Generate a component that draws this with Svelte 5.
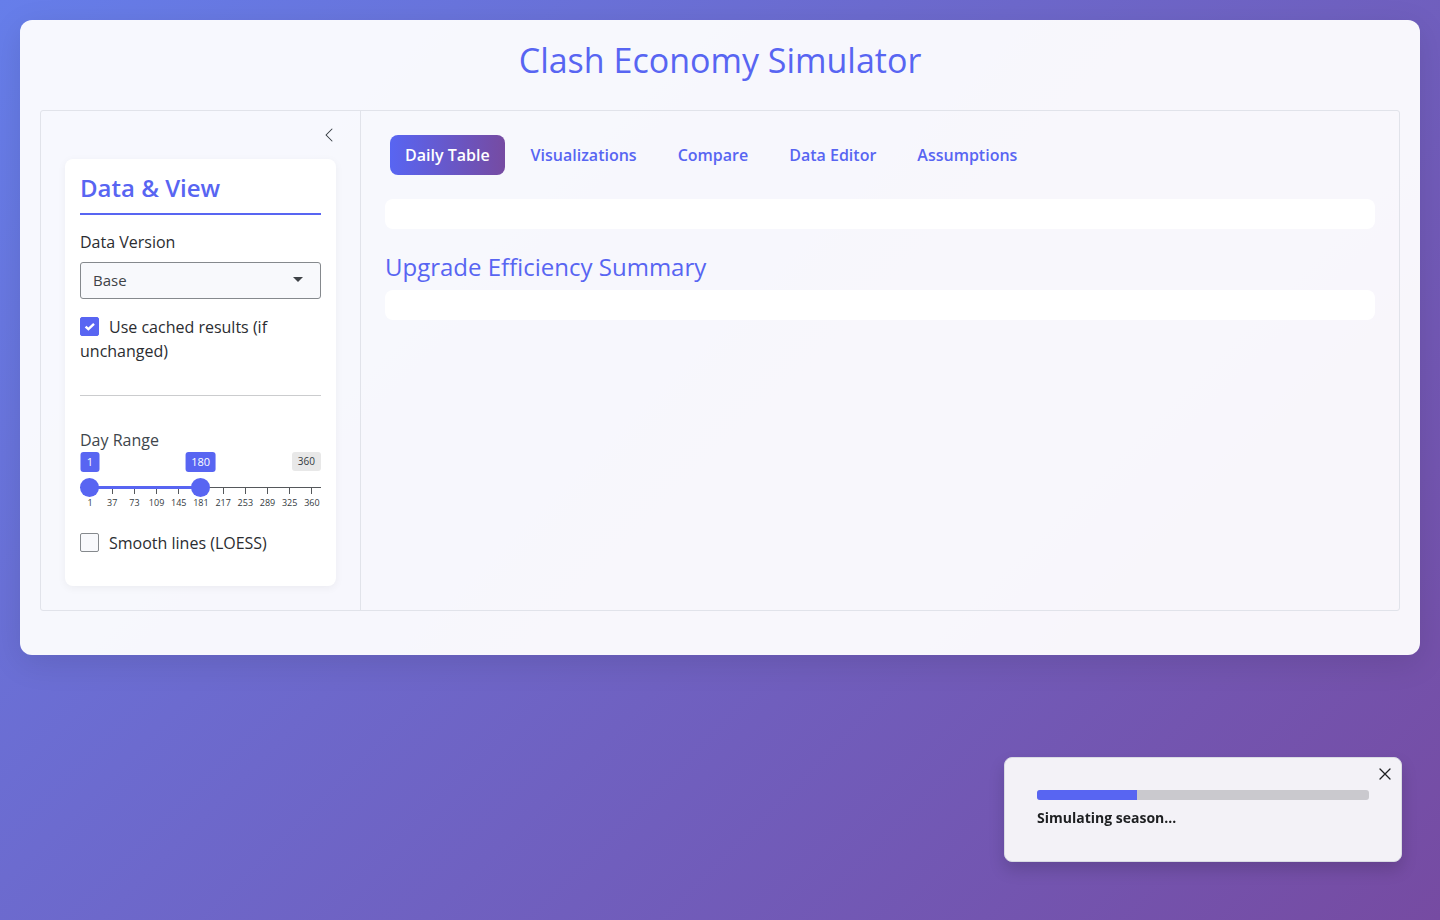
<script>
  const tabs = ['Daily Table', 'Visualizations', 'Compare', 'Data Editor', 'Assumptions'];
  const ticks = [1, 37, 73, 109, 145, 181, 217, 253, 289, 325, 360];
  const min = 1;
  const max = 360;

  let active = $state('Daily Table');
  let version = $state('Base');
  let cached = $state(true);
  let smooth = $state(false);
  let from = $state(1);
  let to = $state(180);
  let collapsed = $state(false);
  let showToast = $state(true);
  let progress = $state(30);

  const pct = (v) => ((v - min) / (max - min)) * 100;
</script>

<div class="page">
  <main class="container">
    <h1>Clash Economy Simulator</h1>

    <div class="layout" class:collapsed>
      <aside class="sidebar">
        <button class="toggle" type="button" aria-label="Toggle sidebar" onclick={() => (collapsed = !collapsed)}>
          <svg viewBox="0 0 16 16" width="16" height="16" fill="currentColor" aria-hidden="true">
            <path d="M12.354 1.646a.5.5 0 0 1 0 .708L6.707 8l5.647 5.646a.5.5 0 0 1-.708.708l-6-6a.5.5 0 0 1 0-.708l6-6a.5.5 0 0 1 .708 0z" />
          </svg>
        </button>

        {#if !collapsed}
          <section class="panel">
            <h2>Data &amp; View</h2>

            <label class="field-label" for="version">Data Version</label>
            <div class="select-wrap">
              <select id="version" bind:value={version}>
                <option>Base</option>
              </select>
              <span class="caret"></span>
            </div>

            <label class="check">
              <input type="checkbox" bind:checked={cached} />Use cached results (if unchanged)
            </label>

            <hr />

            <div class="range-label" id="range-label">Day Range</div>
            <div class="slider" role="group" aria-labelledby="range-label">
              <div class="tags">
                <div class="tag-track">
                  <span class="tag" style:left="{pct(from)}%">{from}</span>
                  <span class="tag" style:left="{pct(to)}%">{to}</span>
                </div>
                <span class="limit">{max}</span>
              </div>
              <div class="rail">
                <div class="rail-track">
                  <div class="fill" style:left="{pct(from)}%" style:width="{pct(to) - pct(from)}%"></div>
                </div>
                <input type="range" aria-label="First day" {min} {max} bind:value={from} />
                <input type="range" aria-label="Last day" {min} {max} bind:value={to} />
              </div>
              <div class="ticks">
                {#each ticks as t}
                  <span class="tick"><i></i><b>{t}</b></span>
                {/each}
              </div>
            </div>

            <label class="check">
              <input type="checkbox" bind:checked={smooth} />Smooth lines (LOESS)
            </label>
          </section>
        {/if}
      </aside>

      <section class="content">
        <nav class="tabs">
          {#each tabs as tab}
            <button type="button" class:active={active === tab} onclick={() => (active = tab)}>{tab}</button>
          {/each}
        </nav>
        <div class="output"></div>
        <h3>Upgrade Efficiency Summary</h3>
        <div class="output"></div>
      </section>
    </div>
  </main>

  {#if showToast}
    <div class="toast" role="status">
      <button type="button" class="close" aria-label="Close" onclick={() => (showToast = false)}>
        <svg viewBox="0 0 12 12" width="12" height="12" aria-hidden="true">
          <path d="M1 1 11 11M11 1 1 11" fill="none" stroke="currentColor" stroke-width="1.3" stroke-linecap="round" />
        </svg>
      </button>
      <div class="progress"><div class="bar" style:width="{progress}%"></div></div>
      <p>Simulating season...</p>
    </div>
  {/if}
</div>

<style>
  :global(body) {
    margin: 0;
  }
  .page {
    --accent: #5865f2;
    box-sizing: border-box;
    min-height: 100vh;
    padding: 20px;
    background: linear-gradient(135deg, #667eea 0%, #764ba2 100%);
    color: #2b2d31;
    font: 400 16px/24px 'Open Sans', sans-serif;
  }
  .page :where(*) {
    box-sizing: border-box;
  }
  button,
  select {
    font: inherit;
    cursor: pointer;
  }
  .container {
    padding: 20px 20px 44px;
    border-radius: 12px;
    background: rgba(255, 255, 255, 0.95);
    box-shadow: 0 8px 32px rgba(0, 0, 0, 0.1);
  }
  h1,
  h2,
  h3 {
    margin: 0;
    color: var(--accent);
    font-weight: 400;
  }
  h1 {
    margin-bottom: 30px;
    text-align: center;
    font-size: 34px;
    line-height: 40px;
  }
  .layout {
    display: grid;
    grid-template-columns: 320px minmax(0, 1fr);
    border: 1px solid #e1e3ea;
    border-radius: 3px;
  }
  .layout.collapsed {
    grid-template-columns: 64px minmax(0, 1fr);
  }
  .sidebar {
    display: flex;
    flex-direction: column;
    padding: 16px 24px 24px;
    border-right: 1px solid #e1e3ea;
  }
  .toggle {
    display: flex;
    align-self: flex-end;
    margin-bottom: 16px;
    padding: 0;
    border: 0;
    background: none;
    color: #343a40;
  }
  .panel {
    padding: 15px 15px 31px;
    border-radius: 8px;
    background: #fff;
    box-shadow: 0 2px 8px rgba(0, 0, 0, 0.05);
  }
  h2 {
    margin-bottom: 15px;
    padding-bottom: 12px;
    border-bottom: 2px solid var(--accent);
    font-size: 24px;
    font-weight: 600;
    line-height: 27px;
  }
  .field-label {
    display: block;
    margin-bottom: 8px;
  }
  .select-wrap {
    display: grid;
    align-items: center;
    margin-bottom: 16px;
  }
  .select-wrap > * {
    grid-area: 1 / 1;
  }
  select {
    appearance: none;
    width: 100%;
    height: 37px;
    padding: 0 12px 2px;
    border: 1px solid #85898d;
    border-radius: 3px;
    background: #f8f9fc;
    color: #3f4347;
    font-size: 15px;
  }
  .caret {
    justify-self: end;
    margin: 0 18px 2px 0;
    border: 5px solid transparent;
    border-top-color: #3f4347;
    border-bottom: 0;
    pointer-events: none;
  }
  .check {
    display: block;
  }
  .check input {
    appearance: none;
    width: 19px;
    height: 19px;
    margin: 0 10px 0 0;
    border: 1px solid #85898d;
    border-radius: 2px;
    background: #f8f9fc;
    vertical-align: -3px;
  }
  .check input:checked {
    border-color: var(--accent);
    background: var(--accent)
      url("data:image/svg+xml,%3Csvg xmlns='http://www.w3.org/2000/svg' viewBox='0 0 19 19'%3E%3Cpath d='M5.6 9.6l2.8 2.6L14 6.8' fill='none' stroke='%23fff' stroke-width='2.4'/%3E%3C/svg%3E")
      center / 19px 19px;
  }
  hr {
    height: 1px;
    margin: 32px 0;
    border: 0;
    background: #cbccce;
  }
  .range-label {
    color: #40464c;
    font-weight: 500;
  }
  .slider {
    margin-bottom: 20px;
  }
  .tags {
    display: flex;
    align-items: flex-start;
    height: 25px;
    padding-left: 10px;
  }
  .tag-track {
    position: relative;
    flex: 1;
    margin-right: -20px;
  }
  .tag,
  .limit {
    border-radius: 3px;
    text-align: center;
  }
  .tag {
    position: absolute;
    top: 0;
    min-width: 19px;
    padding: 0 6px;
    background: var(--accent);
    color: #fff;
    font-size: 11px;
    font-weight: 500;
    line-height: 20px;
    transform: translateX(-50%);
  }
  .limit {
    padding: 0 6px;
    background: #e8e8e8;
    color: #343a40;
    font-size: 10px;
    line-height: 19px;
  }
  .rail {
    position: relative;
    display: flex;
    align-items: center;
    height: 21px;
    padding: 0 9px;
    background: linear-gradient(#55585b, #55585b) center / 100% 1px no-repeat;
  }
  .rail-track {
    position: relative;
    flex: 1;
    height: 3px;
  }
  .fill {
    position: absolute;
    height: 100%;
    background: var(--accent);
  }
  .rail input {
    appearance: none;
    position: absolute;
    inset: 0;
    width: 100%;
    height: 21px;
    margin: 0;
    background: none;
    pointer-events: none;
  }
  .rail input::-webkit-slider-thumb {
    appearance: none;
    width: 19px;
    height: 19px;
    border-radius: 50%;
    background: var(--accent);
    pointer-events: auto;
    cursor: pointer;
  }
  .ticks {
    display: flex;
    justify-content: space-between;
    height: 23px;
    margin-top: -10px;
    padding: 0 9px 0 10px;
  }
  .tick {
    display: flex;
    flex-direction: column;
    align-items: center;
    width: 0;
    color: #343a40;
    font-size: 9px;
    line-height: 12px;
  }
  .tick i {
    flex: none;
    width: 1px;
    height: 6px;
    margin-bottom: 3px;
    background: #55585b;
  }
  .tick b {
    font-weight: 400;
  }
  .content {
    padding: 24px;
  }
  .tabs {
    display: flex;
    flex-wrap: wrap;
    gap: 11px;
    margin-bottom: 24px;
    padding: 0 5px;
  }
  .tabs button {
    padding: 8px 15px;
    border: 0;
    border-radius: 8px;
    background: none;
    color: var(--accent);
    font-weight: 600;
  }
  .tabs button.active {
    background: linear-gradient(90deg, #5865f2, #764ba2);
    color: #fff;
  }
  .output {
    height: 30px;
    border-radius: 8px;
    background: #fff;
  }
  h3 {
    margin: 24px 0 10px;
    font-size: 24px;
    line-height: 27px;
  }
  .toast {
    position: fixed;
    right: 38px;
    bottom: 58px;
    width: 398px;
    padding: 32px 32px 34px;
    border: 1px solid #d9dbe3;
    border-radius: 8px;
    background: #f3f2f7;
    box-shadow: 0 8px 16px rgba(0, 0, 0, 0.15);
  }
  .close {
    position: absolute;
    top: 10px;
    right: 10px;
    display: flex;
    padding: 0;
    border: 0;
    background: none;
    color: #1d1f21;
  }
  .progress {
    height: 10px;
    overflow: hidden;
    border-radius: 3px;
    background: #cac9ce;
  }
  .bar {
    height: 100%;
    background: var(--accent);
  }
  .toast p {
    margin: 8px 0 0;
    color: #1d1f21;
    font-size: 14px;
    font-weight: 700;
    line-height: 19px;
  }
</style>
